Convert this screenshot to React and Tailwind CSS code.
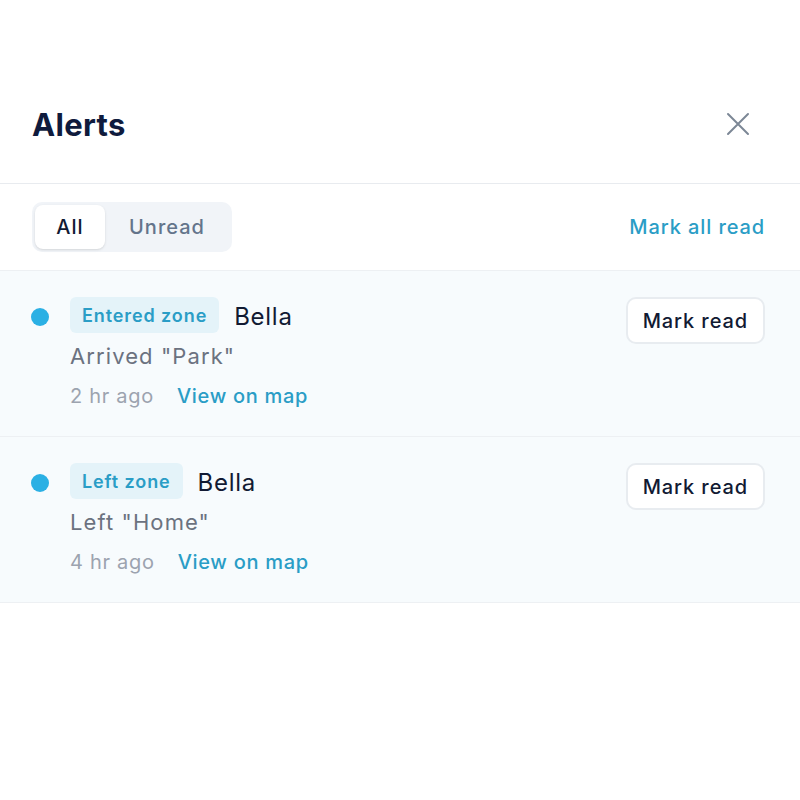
import React from "react";

const font = { fontFamily: "Inter, 'Noto Sans', sans-serif" };

function Row({ badge, name, desc, time }) {
  return (
    <div className="flex items-start bg-[#f7fbfd] border-b border-[#edf0f3] pl-[31px] pr-[35px] pt-[26px] pb-[23px]">
      <div className="w-[18px] h-[18px] rounded-full bg-[#2bb0e4] mt-[11px] mr-[21px] shrink-0" />
      <div className="flex-1 flex flex-col">
        <div className="flex items-center h-9 gap-[15px]">
          <span className="h-9 flex items-center px-3 rounded-md bg-[#e4f3f9] text-[#2a9dc6] text-[18px] font-semibold tracking-[0.05em]">{badge}</span>
          <span className="text-[24px] text-[#111a33] tracking-[0.03em] pt-[3px]">{name}</span>
        </div>
        <div className="mt-[6px] leading-[34px] text-[22px] text-[#6b7280] tracking-[0.05em]">{desc}</div>
        <div className="mt-[6px] leading-[34px] text-[20px] flex gap-[23px] tracking-[0.035em]">
          <span className="text-[#9ca3af]">{time}</span>
          <span className="text-[#2a9dc6] font-medium">View on map</span>
        </div>
      </div>
      <button className="h-[47px] px-[15px] rounded-[10px] border-2 border-[#e8ecf0] bg-white text-[20px] font-medium text-[#111a33] tracking-[0.045em]">
        Mark read
      </button>
    </div>
  );
}

export default function App() {
  return (
    <div className="w-[800px] h-[800px] bg-white pt-16" style={font}>
      <div className="h-[120px] flex items-center justify-between pl-8 pr-[50px] border-b border-[#e8ebef]">
        <h1 className="text-[31px] font-bold text-[#0f1b3d] pt-[3px] tracking-[0.01em]">Alerts</h1>
        <svg width="24" height="24" viewBox="0 0 24 24" fill="none" stroke="#7c8796" strokeWidth="2" strokeLinecap="round">
          <path d="M2 2 L22 22 M22 2 L2 22" />
        </svg>
      </div>
      <div className="flex items-center justify-between pl-8 pr-[35px] py-[18px] border-b border-[#edf0f3]">
        <div className="flex h-[50px] w-[200px] rounded-[10px] bg-[#f1f4f8] p-[3px]">
          <div className="w-[70px] rounded-lg bg-white flex items-center justify-center text-[20px] font-medium text-[#111a33] shadow-sm tracking-[0.05em]">All</div>
          <div className="flex-1 flex items-center justify-center text-[20px] font-medium text-[#64748b] tracking-[0.05em]">Unread</div>
        </div>
        <span className="text-[20px] font-medium text-[#2a9dc6] tracking-[0.045em]">Mark all read</span>
      </div>
      <Row badge="Entered zone" name="Bella" desc={'Arrived "Park"'} time="2 hr ago" />
      <Row badge="Left zone" name="Bella" desc={'Left "Home"'} time="4 hr ago" />
    </div>
  );
}
